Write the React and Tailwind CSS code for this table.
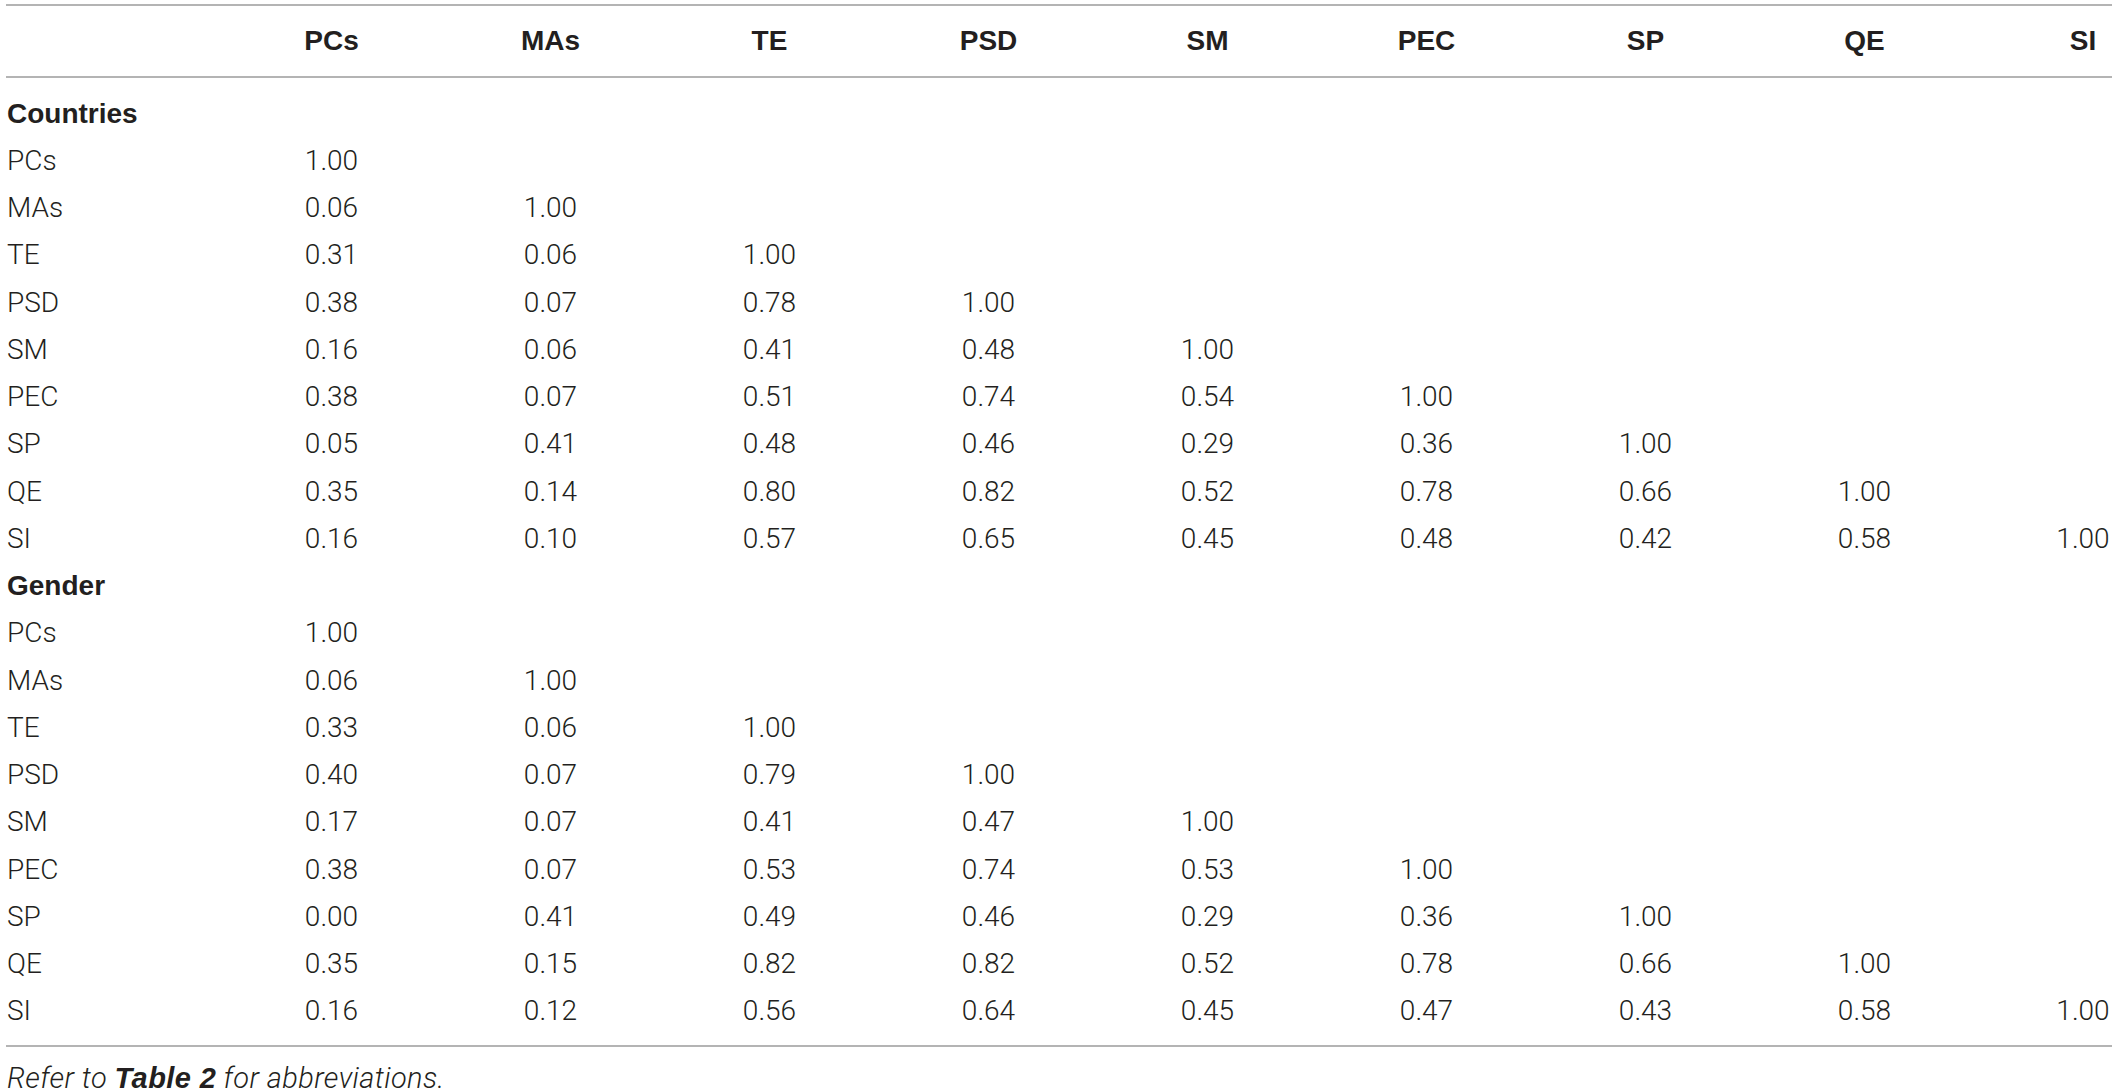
import React from "react";

const cols = ["PCs", "MAs", "TE", "PSD", "SM", "PEC", "SP", "QE", "SI"];

const groups = [
  {
    name: "Countries",
    rows: [
      ["PCs", ["1.00"]],
      ["MAs", ["0.06", "1.00"]],
      ["TE", ["0.31", "0.06", "1.00"]],
      ["PSD", ["0.38", "0.07", "0.78", "1.00"]],
      ["SM", ["0.16", "0.06", "0.41", "0.48", "1.00"]],
      ["PEC", ["0.38", "0.07", "0.51", "0.74", "0.54", "1.00"]],
      ["SP", ["0.05", "0.41", "0.48", "0.46", "0.29", "0.36", "1.00"]],
      ["QE", ["0.35", "0.14", "0.80", "0.82", "0.52", "0.78", "0.66", "1.00"]],
      ["SI", ["0.16", "0.10", "0.57", "0.65", "0.45", "0.48", "0.42", "0.58", "1.00"]],
    ],
  },
  {
    name: "Gender",
    rows: [
      ["PCs", ["1.00"]],
      ["MAs", ["0.06", "1.00"]],
      ["TE", ["0.33", "0.06", "1.00"]],
      ["PSD", ["0.40", "0.07", "0.79", "1.00"]],
      ["SM", ["0.17", "0.07", "0.41", "0.47", "1.00"]],
      ["PEC", ["0.38", "0.07", "0.53", "0.74", "0.53", "1.00"]],
      ["SP", ["0.00", "0.41", "0.49", "0.46", "0.29", "0.36", "1.00"]],
      ["QE", ["0.35", "0.15", "0.82", "0.82", "0.52", "0.78", "0.66", "1.00"]],
      ["SI", ["0.16", "0.12", "0.56", "0.64", "0.45", "0.47", "0.43", "0.58", "1.00"]],
    ],
  },
];

const boldFont = "font-['Liberation_Sans','Roboto',sans-serif] font-bold";

function Row({ label, values, bold, head, className = "" }) {
  return (
    <div className={`grid grid-cols-[216px_repeat(8,219px)_1fr] items-center ${head ? boldFont : ""} ${className}`}>
      <div className={`pl-[1px] ${bold ? boldFont : ""}`}>{label}</div>
      {cols.map((c, i) => {
        const v = values[i] ?? "";
        if (i === cols.length - 1) {
          return (
            <div key={c} className="flex justify-end">
              <span className="w-[58px] text-center">{v}</span>
            </div>
          );
        }
        return (
          <div key={c} className="text-center">
            {v}
          </div>
        );
      })}
    </div>
  );
}

export default function App() {
  return (
    <div className="min-h-screen bg-white text-[#231f20] font-['Roboto','Liberation_Sans',sans-serif] font-light text-[28px] leading-none">
      <div className="ml-[6px] w-[2106px] pt-[4px]">
        {/* header */}
        <div className="border-y-2 border-[#b4b4b4]">
          <Row label="" values={cols} head className="h-[70px]" />
        </div>

        {/* body */}
        <div className="pt-[12px] pb-[10px] border-b-2 border-[#b4b4b4]">
          {groups.map((g) => (
            <div key={g.name}>
              <Row label={g.name} values={[]} bold className="h-[47.25px]" />
              {g.rows.map(([label, vals]) => (
                <Row key={g.name + label} label={label} values={vals} className="h-[47.25px]" />
              ))}
            </div>
          ))}
        </div>

        <p className="mt-[15px] pl-[1px] italic text-[29px] tracking-[0.4px] leading-[32px]">
          Refer to <span className={boldFont}>Table 2</span> for abbreviations.
        </p>
      </div>
    </div>
  );
}
